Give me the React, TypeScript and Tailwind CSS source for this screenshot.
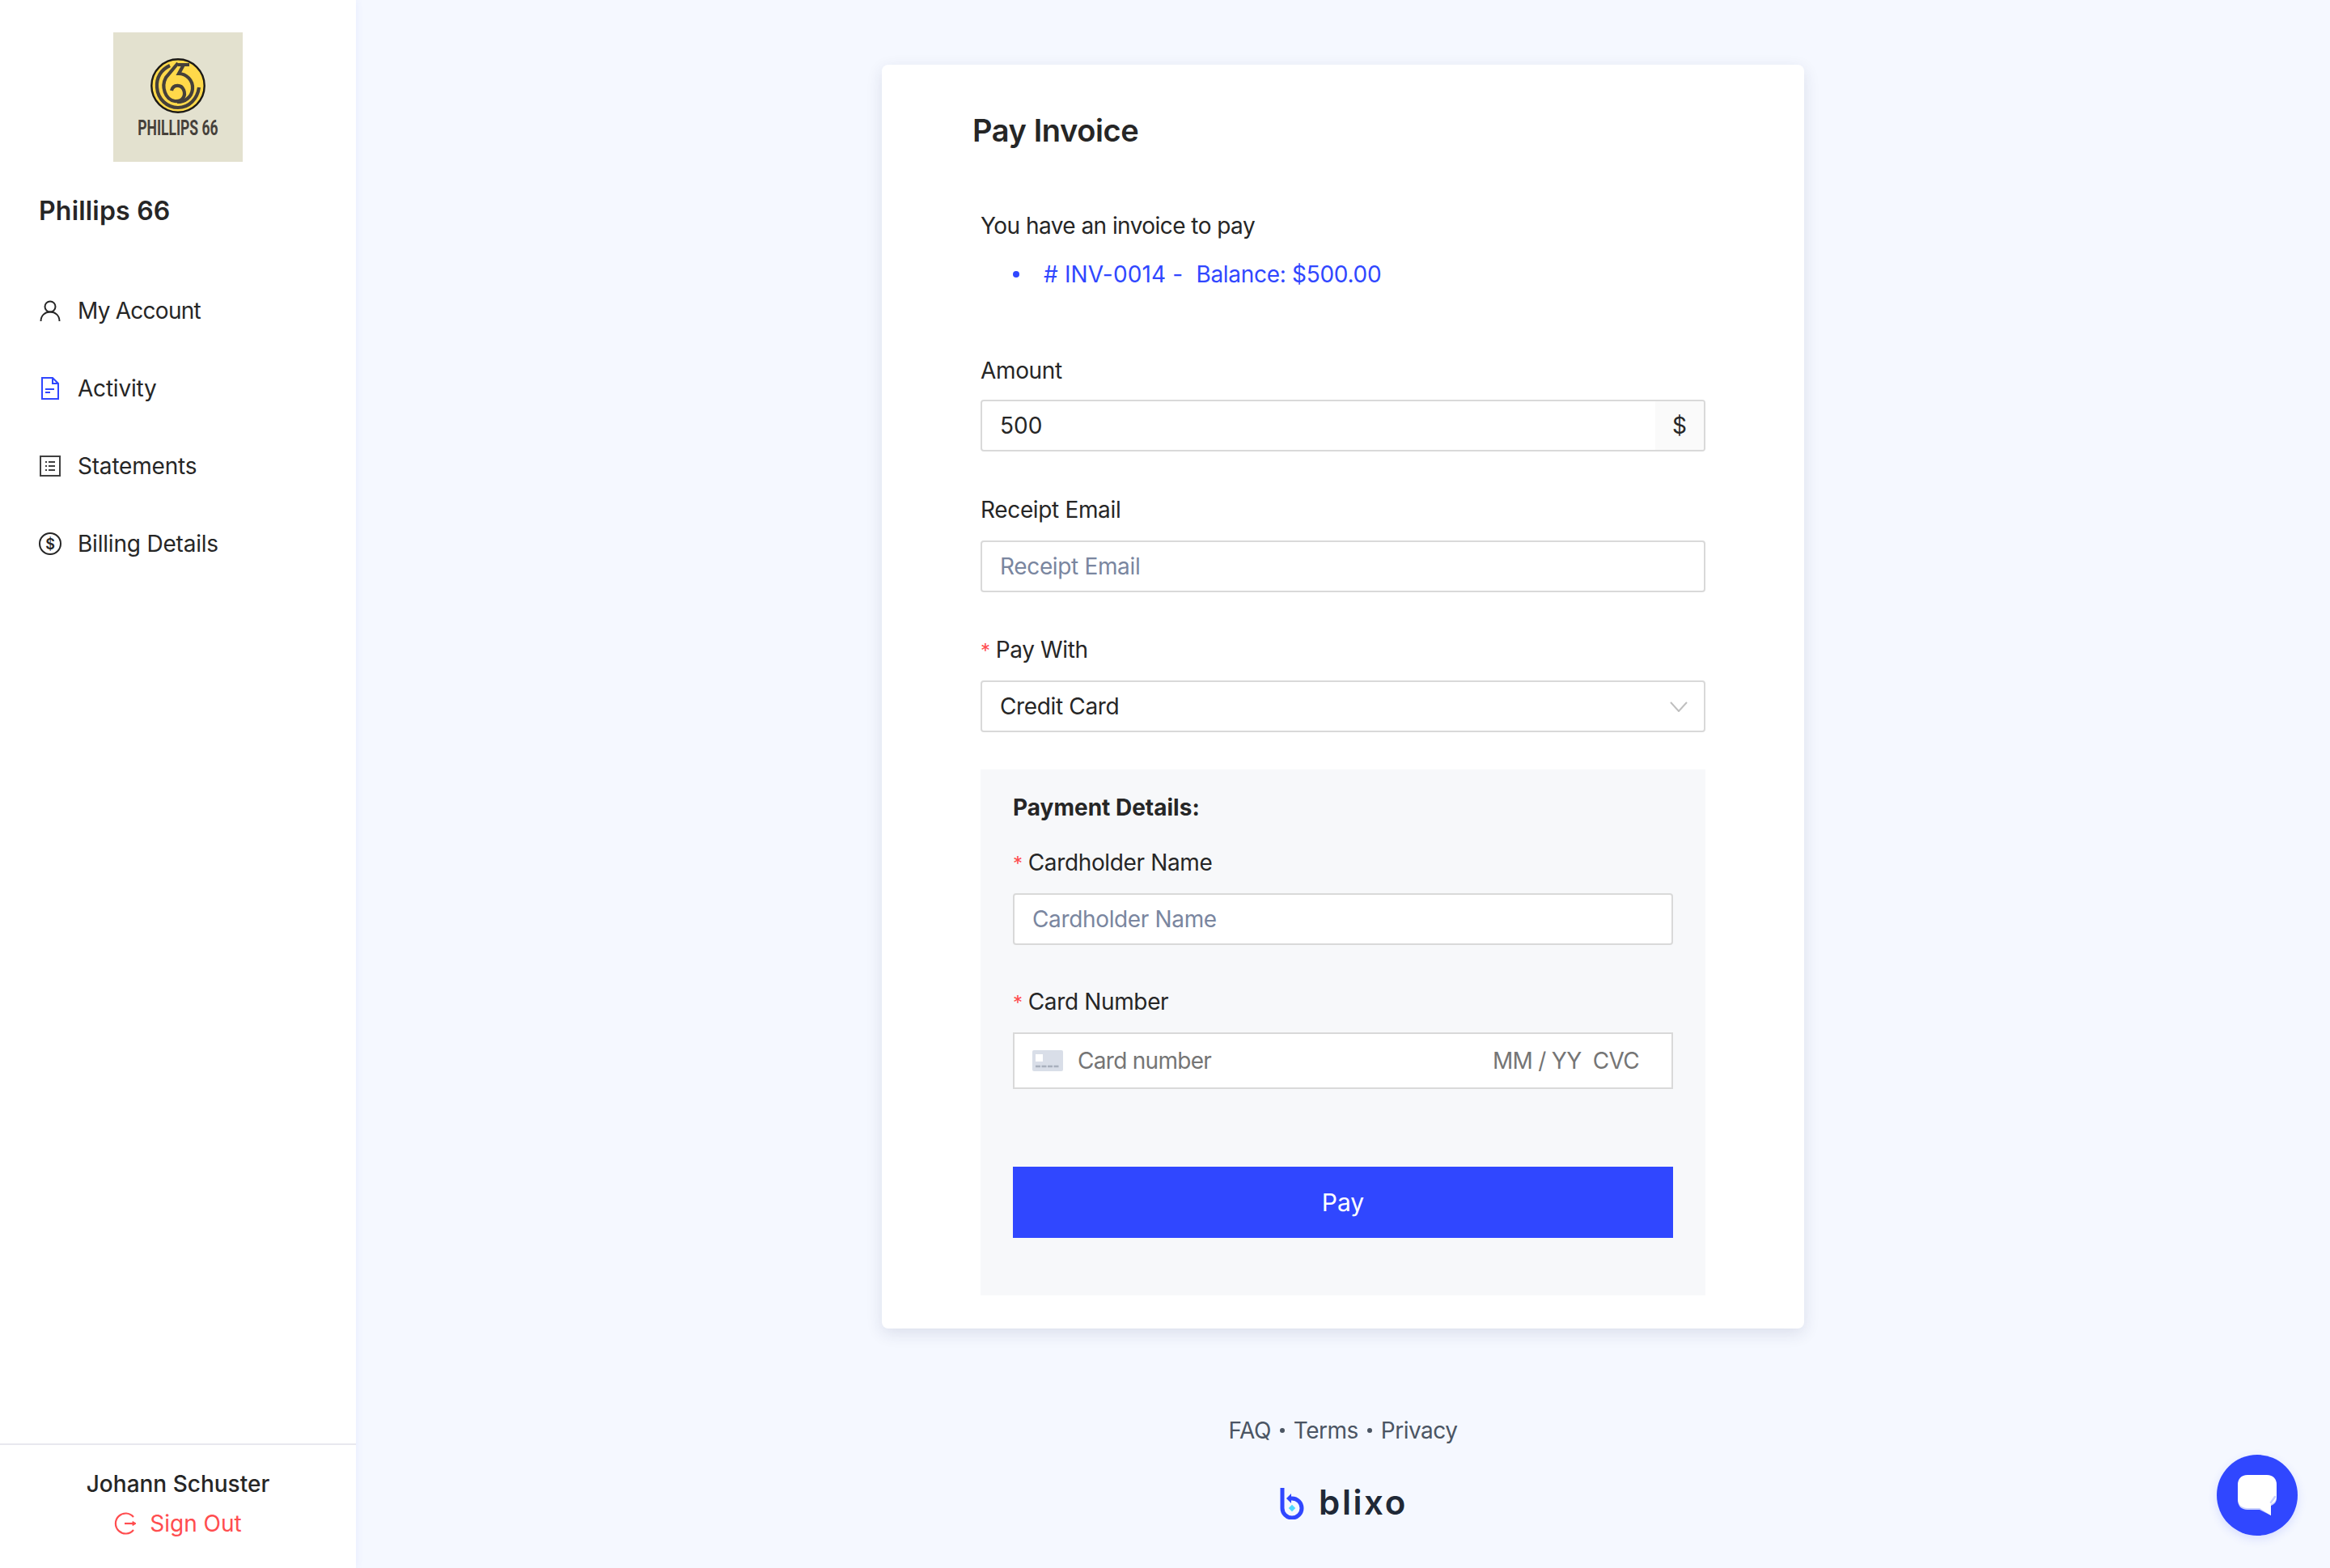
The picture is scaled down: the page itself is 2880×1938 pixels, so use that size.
const labelText = 'text-[28px] leading-[40px] text-[#262626]';
const inputBox = 'flex h-[64px] items-center rounded-[4px] border-2 border-[#d9d9d9] bg-white px-[22px] text-[28px] tracking-[-0.35px]';

function Logo() {
  return (
    <div className="flex h-[160px] w-[160px] flex-col items-center bg-[#e3e1cf] pt-[32px]">
      <svg viewBox="0 0 68 68" className="h-[68px] w-[68px]">
        <circle cx="34" cy="34" r="32.7" fill="#ffd94a" stroke="#1c1a17" strokeWidth="2.4" />
        <g fill="none" stroke="#45403a" strokeWidth="4.2" strokeLinecap="butt">
          <path d="M24 9 C13 14 7 24 8 36 C9 51 21 61 34 61 C48 61 58 50 60 36" />
          <path d="M34 6 L19 24 C13 35 18 51 30 53 C40 54 44 46 41 39 C38 32 28 32 26 40" />
          <path d="M34 8 H48 M41 8 L35 19 C44 19 53 27 52 38 C51 48 43 54 33 54" />
        </g>
      </svg>
      <span className="mt-[5px] block scale-x-[0.7] font-['Roboto',sans-serif] text-[25px] leading-[28px] font-bold whitespace-nowrap text-[#45403a]">
        PHILLIPS 66
      </span>
    </div>
  );
}

function UserIcon() {
  return (
    <svg viewBox="0 0 26 27" className="h-[27px] w-[26px]" fill="none" stroke="#262626" strokeWidth="2">
      <circle cx="13" cy="8" r="6.5" />
      <path d="M1.5 26 C1.5 19 6.5 14.5 13 14.5 C19.5 14.5 24.5 19 24.5 26" />
    </svg>
  );
}

function ActivityIcon() {
  return (
    <svg viewBox="0 0 24 28" className="h-[28px] w-[24px]" fill="none" stroke="#3047ff" strokeWidth="2">
      <path d="M2 1 H15 L22 8 V27 H2 Z" />
      <path d="M15 1 V8 H22" />
      <path d="M6 15 H17 M6 19 H12" />
    </svg>
  );
}

function StatementsIcon() {
  return (
    <svg viewBox="0 0 26 26" className="h-[26px] w-[26px]" fill="none" stroke="#404040" strokeWidth="2">
      <rect x="1" y="1" width="24" height="24" />
      <path d="M11 8 H19 M11 13 H19 M11 18 H19" />
      <path d="M7 8 H9 M7 13 H9 M7 18 H9" />
    </svg>
  );
}

function BillingIcon() {
  return (
    <svg viewBox="0 0 28 28" className="h-[28px] w-[28px]">
      <circle cx="14" cy="14" r="13" fill="none" stroke="#262626" strokeWidth="2" />
      <text x="14" y="20.5" textAnchor="middle" fontFamily="Inter, sans-serif" fontWeight="600" fontSize="18" fill="#262626">
        $
      </text>
    </svg>
  );
}

function SignOutIcon() {
  return (
    <svg viewBox="0 0 28 28" className="h-[28px] w-[28px]" fill="none" stroke="#ff4d4f" strokeWidth="2.2">
      <path d="M24 6 A12.5 12.5 0 1 0 24 22" />
      <path d="M13 14 H26" />
      <path d="M23 11.5 L27 14 L23 16.5 Z" fill="#ff4d4f" strokeWidth="1" />
    </svg>
  );
}

function NavItem({ icon, label, tight }: { icon: React.ReactNode; label: string; tight?: boolean }) {
  return (
    <div className="flex h-[96px] items-center">
      <div className="flex w-[48px] shrink-0 items-center">
        <div className="flex w-[28px] justify-center">{icon}</div>
      </div>
      <span className={`text-[28px] text-[#262626] ${tight ? 'tracking-[-0.75px]' : 'tracking-[-0.2px]'}`}>{label}</span>
    </div>
  );
}

function Sidebar() {
  return (
    <aside className="flex h-[1938px] w-[440px] shrink-0 flex-col bg-white shadow-[0_0_10px_rgba(48,71,255,0.08)]">
      <div className="flex justify-center pt-[40px]">
        <Logo />
      </div>
      <div className="mt-[41px] px-[48px] text-[32px] leading-[40px] font-semibold tracking-[0.2px] text-[#262626]">Phillips 66</div>
      <nav className="mt-[55px] px-[48px]">
        <NavItem icon={<UserIcon />} label="My Account" tight />
        <NavItem icon={<ActivityIcon />} label="Activity" />
        <NavItem icon={<StatementsIcon />} label="Statements" />
        <NavItem icon={<BillingIcon />} label="Billing Details" />
      </nav>
      <div className="mt-auto h-[154px] border-t-2 border-[#e8e8ef] pt-[28px] text-center">
        <div className="text-[28px] leading-[40px] font-medium text-[#262626]">Johann Schuster</div>
        <div className="mt-[9px] flex items-center justify-center gap-[16px] text-[28px] leading-[40px] text-[#ff4d4f]">
          <SignOutIcon />
          Sign Out
        </div>
      </div>
    </aside>
  );
}

function Field({ label, required, tight, children }: { label: string; required?: boolean; tight?: boolean; children: React.ReactNode }) {
  return (
    <div>
      <div className={`${labelText} flex items-baseline tracking-[-0.35px] ${tight ? 'mb-[16px]' : 'mb-[18px]'}`}>
        {required && <span className="mr-[7px] text-[24px] leading-none text-[#ff4d4f]">*</span>}
        {label}
      </div>
      {children}
    </div>
  );
}

function CardIcon() {
  return (
    <svg viewBox="0 0 38 26" className="h-[26px] w-[38px]">
      <rect width="38" height="26" rx="2" fill="#d9dee8" />
      <rect x="4" y="5" width="9" height="9" fill="#ffffff" />
      <path d="M4 20 H34" stroke="#a9b0bd" strokeWidth="2.5" strokeDasharray="6 1.5" />
    </svg>
  );
}

function InvoiceCard() {
  return (
    <section className="h-[1562px] w-[1140px] rounded-[8px] bg-white px-[122px] shadow-[0_6px_20px_rgba(30,40,90,0.12)]">
      <h1 className="-ml-[10px] pt-[57px] text-[38px] leading-[48px] font-semibold tracking-[-0.4px] text-[#262626]">Pay Invoice</h1>
      <p className={`${labelText} mt-[74px] tracking-[-0.55px]`}>You have an invoice to pay</p>
      <ul className="mt-[20px] flex items-center pl-[40px] text-[28px] leading-[40px] text-[#3047ff]">
        <li className="flex items-center whitespace-pre">
          <span className="mr-[30px] h-[8px] w-[8px] rounded-full bg-[#3047ff]" />
          <span className="tracking-[0.15px]">{'# INV-0014 -  '}</span>
          <span className="tracking-[-0.3px]">Balance: $500.00</span>
        </li>
      </ul>
      <div className="mt-[79px]">
        <Field label="Amount" tight>
          <div className="flex h-[64px] items-stretch overflow-hidden rounded-[4px] border-2 border-[#d9d9d9] bg-white text-[28px] text-[#262626]">
            <div className="flex flex-1 items-center px-[22px]">500</div>
            <div className="flex w-[60px] items-center justify-center bg-[#fafafa]">$</div>
          </div>
        </Field>
      </div>
      <div className="mt-[52px]">
        <Field label="Receipt Email">
          <div className={`${inputBox} text-[#7a869f]`}>Receipt Email</div>
        </Field>
      </div>
      <div className="mt-[51px]">
        <Field label="Pay With" required>
          <div className={`${inputBox} justify-between pr-[20px] text-[#262626]`}>
            Credit Card
            <svg viewBox="0 0 22 13" className="h-[13px] w-[22px]" fill="none" stroke="#bfbfbf" strokeWidth="2">
              <path d="M1 1 L11 12 L21 1" />
            </svg>
          </div>
        </Field>
      </div>
      <div className="mt-[46px] h-[650px] bg-[#f7f8fa] px-[40px] pt-[27px]">
        <div className="text-[28px] leading-[40px] font-bold text-[#262626]">Payment Details:</div>
        <div className="mt-[28px]">
          <Field label="Cardholder Name" required>
            <div className={`${inputBox} text-[#7a869f]`}>Cardholder Name</div>
          </Field>
        </div>
        <div className="mt-[50px]">
          <Field label="Card Number" required>
            <div className="flex h-[70px] items-center border-2 border-[#d9d9d9] bg-white pr-[40px] pl-[22px] text-[28px] tracking-[-0.7px] text-[#757575]">
              <CardIcon />
              <span className="ml-[18px]">Card number</span>
              <span className="ml-auto whitespace-pre">{'MM / YY  CVC'}</span>
            </div>
          </Field>
        </div>
        <button className="mt-[96px] h-[88px] w-full bg-[#3047ff] text-[30px] text-white">Pay</button>
      </div>
    </section>
  );
}

function BlixoLogo() {
  return (
    <div className="flex items-end justify-center gap-[18px]">
      <svg viewBox="0 0 30 40" className="ml-[2px] h-[40px] w-[30px]">
        <path d="M3 1 V26 A12 12 0 1 0 15 14 H11" fill="none" stroke="#3047ff" strokeWidth="5" strokeLinecap="butt" />
        <path d="M14 8 L8 14 L14 20 Z" fill="#3047ff" />
        <rect x="12" y="23" width="6" height="6" fill="#4fd8ff" transform="rotate(45 15 26)" />
      </svg>
      <span className="text-[42px] leading-[42px] font-semibold tracking-[2.6px] text-[#1f2937]">blixo</span>
    </div>
  );
}

export default function App() {
  return (
    <div className="flex h-[1938px] w-[2880px] overflow-hidden bg-[#f5f8ff] font-['Inter',sans-serif]">
      <Sidebar />
      <main className="relative flex flex-1 flex-col items-center pt-[80px]">
        <InvoiceCard />
        <div className="mt-[106px] flex items-center gap-[11px] text-[28px] leading-[40px] tracking-[-0.5px] text-[#4b5563]">
          <span>FAQ</span>
          <span className="h-[6px] w-[6px] rounded-full bg-[#4b5563]" />
          <span>Terms</span>
          <span className="h-[6px] w-[6px] rounded-full bg-[#4b5563]" />
          <span>Privacy</span>
        </div>
        <div className="mt-[48px]">
          <BlixoLogo />
        </div>
        <div className="absolute top-[1798px] right-[40px] flex h-[100px] w-[100px] items-center justify-center rounded-full bg-[#3047ff] shadow-[0_4px_12px_rgba(48,71,255,0.15)]">
          <svg viewBox="0 0 48 50" className="h-[50px] w-[48px]">
            <path d="M12 2 H36 C44 2 48 7 48 14 V28 C48 33 46 36 41 38 V50 L27 43 H12 C4 43 0 38 0 31 V14 C0 7 4 2 12 2 Z" fill="#c9d0fd" />
            <path d="M12 0 H36 C44 0 48 5 48 12 V26 C48 31 46 34 41 36 V50 L27 41 H12 C4 41 0 36 0 29 V12 C0 5 4 0 12 0 Z" fill="#ffffff" />
            <path d="M41 34 L46 27" stroke="#c9d0fd" strokeWidth="2.5" strokeLinecap="round" />
          </svg>
        </div>
      </main>
    </div>
  );
}
